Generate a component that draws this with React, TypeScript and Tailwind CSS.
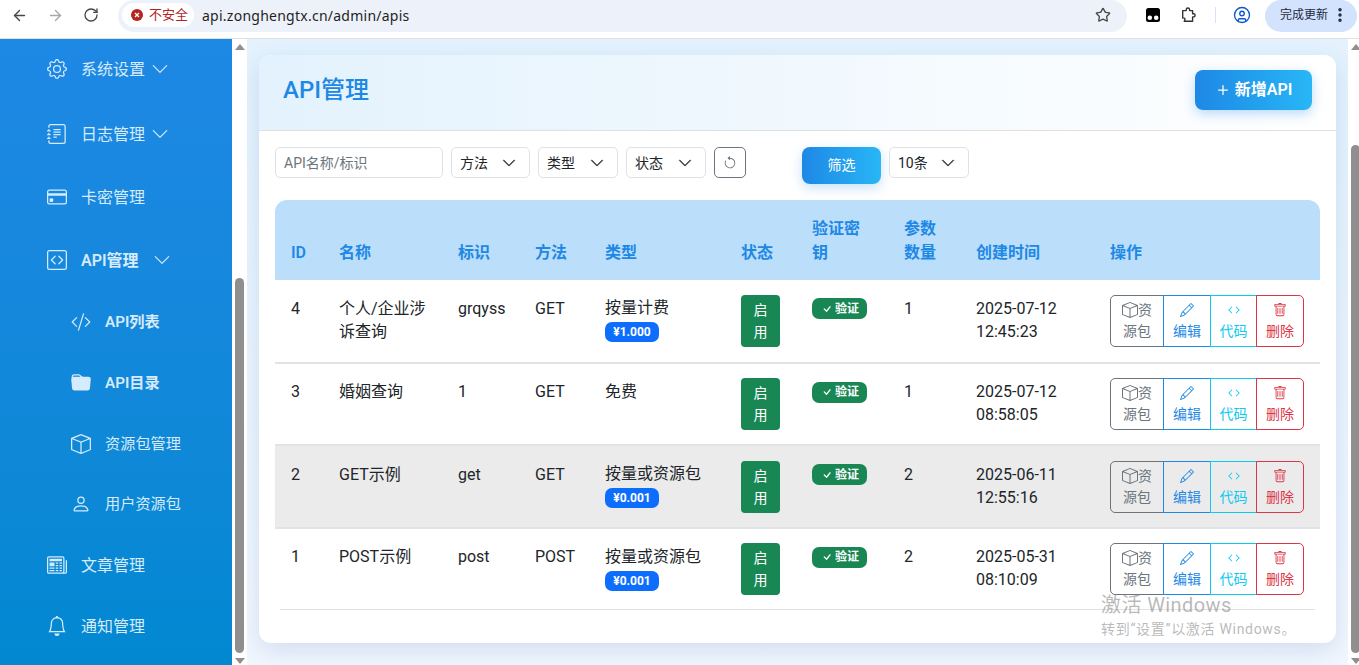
import React from "react";
import { ArrowLeft, ArrowRight, RotateCw, Star, CircleUser, EllipsisVertical } from "lucide-react";
import {
  BsGear, BsJournalText, BsCreditCard, BsCodeSquare, BsCodeSlash, BsFolderFill, BsBox, BsPerson,
  BsNewspaper, BsBell, BsChevronDown, BsArrowCounterclockwise, BsPencil, BsCode, BsTrash, BsCheck, BsPlus,
} from "react-icons/bs";

const nav = [
  { icon: BsGear, label: "系统设置", chev: true, cls: "" },
  { icon: BsJournalText, label: "日志管理", chev: true, cls: "mt-[5px]" },
  { icon: BsCreditCard, label: "卡密管理", cls: "mt-[3px]" },
  { icon: BsCodeSquare, label: "API管理", chev: true, bold: true, cls: "mt-[3px]" },
  { icon: BsCodeSlash, label: "API列表", sub: true, bold: true, cls: "mt-[2px]" },
  { icon: BsFolderFill, label: "API目录", sub: true, bold: true, cls: "mt-[1px]" },
  { icon: BsBox, label: "资源包管理", sub: true, cls: "mt-[1px]" },
  { icon: BsPerson, label: "用户资源包", sub: true, cls: "" },
  { icon: BsNewspaper, label: "文章管理", cls: "mt-[1px]" },
  { icon: BsBell, label: "通知管理", cls: "mt-[1px]" },
];

const rows = [
  { id: 4, name: "个人/企业涉诉查询", key_: "grqyss", method: "GET", type: "按量计费", price: "¥1.000", n: 1, d: "2025-07-12", t: "12:45:23" },
  { id: 3, name: "婚姻查询", key_: "1", method: "GET", type: "免费", n: 1, d: "2025-07-12", t: "08:58:05" },
  { id: 2, name: "GET示例", key_: "get", method: "GET", type: "按量或资源包", price: "¥0.001", n: 2, d: "2025-06-11", t: "12:55:16", hover: true },
  { id: 1, name: "POST示例", key_: "post", method: "POST", type: "按量或资源包", price: "¥0.001", n: 2, d: "2025-05-31", t: "08:10:09", last: true },
];

const headers = ["ID", "名称", "标识", "方法", "类型", "状态", "验证密钥", "参数数量", "创建时间", "操作"];
const widths = ["w-[48px]", "w-[119px]", "w-[77px]", "w-[70px]", "w-[136px]", "w-[71px]", "w-[92px]", "w-[72px]", "w-[134px]", "w-[226px]"];

function Sel({ label, w }: { label: string; w: string }) {
  return (
    <div className={`${w} h-[31px] flex items-center justify-between pl-[8px] pr-[13px] border border-[#dee2e6] rounded-[5px] text-[14px] text-[#212529] bg-white`}>
      <span className="pt-[1px]">{label}</span>
      <BsChevronDown className="w-[14px] h-[14px] text-[#343a40]" strokeWidth={0.6} />
    </div>
  );
}

function Scrollbar({ thumb, cls }: { thumb: string; cls: string }) {
  return (
    <div className={`w-[15px] shrink-0 bg-white relative flex flex-col items-center ${cls}`}>
      <div className="mt-[5px] w-0 h-0 border-x-[5px] border-x-transparent border-b-[6px] border-b-[#8f8f8f]" />
      <div className={`${thumb} w-[9px] rounded-[5px] bg-[#8f8f8f]`} />
      <div className="mt-[5px] w-0 h-0 border-x-[5px] border-x-transparent border-t-[6px] border-t-[#8f8f8f]" />
    </div>
  );
}

export default function App() {
  return (
    <div className="w-[1359px] h-[665px] overflow-hidden flex flex-col relative bg-white font-['Roboto','Noto_Sans_CJK_SC',sans-serif] text-[#212529]">
      {/* browser chrome */}
      <div className="h-[39px] shrink-0 bg-white border-b border-[#dfe1e5] flex items-start">
        <div className="w-[118px] h-[32px] shrink-0 flex items-center pl-[11px] pb-[2px] gap-[19px]">
          <ArrowLeft className="w-[17px] h-[17px] text-[#474747]" strokeWidth={2} />
          <ArrowRight className="w-[17px] h-[17px] text-[#a8a8a8]" strokeWidth={2} />
          <RotateCw className="w-[16px] h-[16px] text-[#474747]" strokeWidth={2} />
        </div>
        <div className="w-[1009px] h-[32px] shrink-0 rounded-r-full rounded-l-full bg-[#edf2fa] flex items-center pl-[4px] pr-[16px] pb-[2px]">
          <div className="w-[72px] h-[24px] rounded-full bg-white flex items-center pl-[9px] gap-[6px] text-[13px] text-[#b3261e] whitespace-nowrap">
            <svg viewBox="0 0 12 12" className="w-[12px] h-[12px] shrink-0">
              <circle cx="6" cy="6" r="6" fill="#b3261e" />
              <path d="M4 4l4 4M8 4l-4 4" stroke="#fff" strokeWidth="1.4" />
            </svg>
            不安全
          </div>
          <span className="ml-[8px] text-[14px] tracking-[0.25px] text-[#1f1f1f] font-['Noto_Sans',sans-serif]">api.zonghengtx.cn/admin/apis</span>
          <Star className="ml-auto w-[16px] h-[16px] text-[#474747]" strokeWidth={2} />
        </div>
        <div className="w-[138px] h-[32px] shrink-0 flex items-center pb-[2px]">
          <svg viewBox="0 0 14 14" className="ml-[19px] w-[14px] h-[14px]">
            <rect width="14" height="14" rx="2.5" fill="#000" />
            <circle cx="3.8" cy="9.8" r="2.3" fill="#fff" />
            <circle cx="10.2" cy="9.8" r="2.3" fill="#fff" />
          </svg>
          <svg viewBox="0 0 16 16" className="ml-[21px] w-[16px] h-[16px]" fill="none" stroke="#333" strokeWidth="1.4" strokeLinejoin="round">
            <path d="M1.7 3.6H5.2V2.7a1.7 1.7 0 0 1 3.4 0v0.9h3v3.1h.9a1.6 1.6 0 0 1 0 3.2h-.9v4.4H3.2L4 12.4a1.7 1.7 0 0 0-2.3-1.4Z" />
          </svg>
          <div className="ml-[18px] w-[1px] h-[16px] bg-[#d3e3fd]" />
          <CircleUser className="ml-[17px] w-[18px] h-[18px] text-[#0b57d0]" strokeWidth={1.8} />
        </div>
        <div className="w-[92px] h-[32px] shrink-0 rounded-full bg-[#d3e3fd] flex items-center pl-[15px] pb-[2px] text-[12px] text-[#1f2a44] whitespace-nowrap">
          完成更新
          <EllipsisVertical className="ml-[3px] w-[18px] h-[18px] text-[#1f2a44]" strokeWidth={2.6} />
        </div>
      </div>

      <div className="flex-1 flex min-h-0">
        {/* sidebar */}
        <aside className="w-[232px] shrink-0 bg-gradient-to-b from-[#1e88e5] to-[#0288d1] text-[#d6ebfb] flex flex-col">
          {nav.map((n) => {
            const I = n.icon;
            return (
              <div key={n.label} className={`h-[60px] shrink-0 flex items-center ${n.sub ? "pl-[71px] text-[15.2px]" : "pl-[47px] text-[16px]"} ${n.bold ? "font-semibold" : ""} ${n.cls}`}>
                <I className="w-[20px] h-[20px] shrink-0" />
                <span className="ml-[14px] pt-[1px] whitespace-nowrap">{n.label}</span>
                {n.chev && <BsChevronDown className={`w-[18px] h-[18px] ${n.bold ? "ml-[14px]" : "ml-[6px]"}`} />}
              </div>
            );
          })}
        </aside>
        <Scrollbar thumb="mt-[228px] h-[375px]" cls="" />

        {/* main */}
        <main className="w-[1101px] shrink-0 bg-gradient-to-b from-[#e3f2fd] to-[#f1f7fe] pl-3 pr-3 pt-4">
          <div className="h-[588px] bg-white rounded-xl shadow-[0_8px_24px_rgba(30,80,160,0.14)] overflow-hidden">
            <div className="h-[76px] border-b border-[#e0e0e0] bg-gradient-to-r from-[#e3f2fd] to-white flex items-center justify-between pl-6 pr-6 pb-[5px]">
              <h1 className="text-[24px] font-medium text-[#1e88e5]">API管理</h1>
              <button className="w-[117px] h-[40px] pr-[2px] rounded-lg bg-gradient-to-r from-[#1e88e5] to-[#29b6f6] text-white text-[16px] font-semibold flex items-center justify-center shadow-[0_4px_12px_rgba(30,136,229,0.3)]">
                <BsPlus className="w-[20px] h-[20px] mr-[2px]" />
                新增API
              </button>
            </div>

            <div className="px-4 pt-4">
              <div className="flex items-start gap-2">
                <input
                  placeholder="API名称/标识"
                  className="w-[168px] h-[31px] px-2 border border-[#dee2e6] rounded-[5px] text-[14px] placeholder:text-[#6c757d] outline-none"
                />
                <Sel label="方法" w="w-[79px]" />
                <Sel label="类型" w="w-[80px]" />
                <Sel label="状态" w="w-[80px]" />
                <button className="w-[32px] h-[31px] border border-[#6c757d] rounded-[5px] flex items-center justify-center text-[#6c757d]">
                  <BsArrowCounterclockwise className="w-[14px] h-[14px]" />
                </button>
                <button className="ml-[48px] w-[79px] h-[37px] rounded-lg bg-gradient-to-r from-[#1e88e5] to-[#29b6f6] text-white text-[14px] shadow-[0_4px_12px_rgba(30,136,229,0.25)]">
                  筛选
                </button>
                <Sel label="10条" w="w-[80px]" />
              </div>

              <table className="mt-[16px] w-[1045px] table-fixed border-collapse text-[16px]">
                <colgroup>
                  {widths.map((w) => (
                    <col key={w} className={w} />
                  ))}
                </colgroup>
                <thead>
                  <tr className="h-[80px] bg-[#bbdefb] text-[#1e88e5]">
                    {headers.map((h, i) => (
                      <th
                        key={h}
                        className={`px-4 pb-[15px] pt-4 align-bottom text-left font-semibold leading-[24px] ${i === 0 ? "rounded-tl-xl" : ""} ${i === 9 ? "rounded-tr-xl" : ""}`}
                      >
                        {h}
                      </th>
                    ))}
                  </tr>
                </thead>
                <tbody>
                  {rows.map((r) => (
                    <tr key={r.id} className={`${r.last ? "h-[81.6px]" : "h-[82.6px] border-b-2 border-[#e2e3e5]"} ${r.hover ? "bg-[#ebebeb]" : ""}`}>
                      <td className="px-4 pt-[16.6px] align-top leading-[24px]">{r.id}</td>
                      <td className="px-4 pt-[16.6px] align-top leading-[23px]">{r.name}</td>
                      <td className="px-4 pt-[16.6px] align-top leading-[24px]">{r.key_}</td>
                      <td className="px-4 pt-[16.6px] align-top leading-[24px]">{r.method}</td>
                      <td className="px-4 pt-[16.3px] align-top leading-[24px]">
                        <div>{r.type}</div>
                        {r.price && (
                          <span className="mt-[2px] block w-[54px] h-[20px] rounded-[7px] bg-[#0d6efd] text-white text-[12px] font-bold leading-[20px] text-center">
                            {r.price}
                          </span>
                        )}
                      </td>
                      <td className="px-4 pt-4 align-top">
                        <div className="-mt-[1.4px] w-[39px] h-[52px] rounded-[4px] bg-[#198754] text-white text-[14px] leading-[22px] px-[12px] py-[4px] text-center">
                          启用
                        </div>
                      </td>
                      <td className="px-4 pt-4 align-top">
                        <div className="mt-[2px] w-[55px] h-[21px] rounded-[7px] bg-[#198754] text-white text-[12px] font-bold flex items-center justify-center whitespace-nowrap">
                          <BsCheck className="w-[14px] h-[14px] mr-[1px]" />
                          验证
                        </div>
                      </td>
                      <td className="px-4 pt-[16.6px] align-top leading-[24px]">{r.n}</td>
                      <td className="px-4 pt-[16.6px] align-top leading-[23px]">
                        {r.d}
                        <br />
                        {r.t}
                      </td>
                      <td className="px-4 pt-4 align-top">
                        <div className="-mt-[1.4px] flex h-[52px] w-[194px] text-[14px] leading-[21px]">
                          <button className="w-[54px] border border-[#6c757d] rounded-l-[5px] text-[#6c757d] px-[8px] py-[4px]">
                            <BsBox className="inline-block w-[16px] h-[16px] align-[-3px]" />资源包
                          </button>
                          <button className="-ml-px w-[48px] border border-[#1e88e5] text-[#1e88e5] px-[8px] py-[4px]">
                            <BsPencil className="inline-block w-[14px] h-[14px] align-[-2px]" /> 编辑
                          </button>
                          <button className="-ml-px w-[47px] border border-[#0dcaf0] text-[#0dcaf0] px-[8px] py-[4px]">
                            <BsCode className="inline-block w-[14px] h-[14px] align-[-2px]" /> 代码
                          </button>
                          <button className="-ml-px w-[48px] border border-[#dc3545] rounded-r-[5px] text-[#dc3545] px-[8px] py-[4px]">
                            <BsTrash className="inline-block w-[14px] h-[14px] align-[-2px]" /> 删除
                          </button>
                        </div>
                      </td>
                    </tr>
                  ))}
                </tbody>
              </table>
              <div className="mx-[5px] border-t border-[#dee2e6]" />
            </div>
          </div>
        </main>
        <Scrollbar thumb="mt-[95px] h-[508px]" cls="items-start pl-[3px]" />
      </div>

      {/* Windows activation watermark */}
      <div className="absolute left-[1101px] top-[592px] text-[#8a8a8a]/60 pointer-events-none whitespace-nowrap">
        <div className="text-[20px] leading-[26px] tracking-[0.4px]">激活 Windows</div>
        <div className="text-[14px] leading-[20px] mt-[1px] tracking-[0.7px]">转到“设置”以激活 Windows。</div>
      </div>
    </div>
  );
}
